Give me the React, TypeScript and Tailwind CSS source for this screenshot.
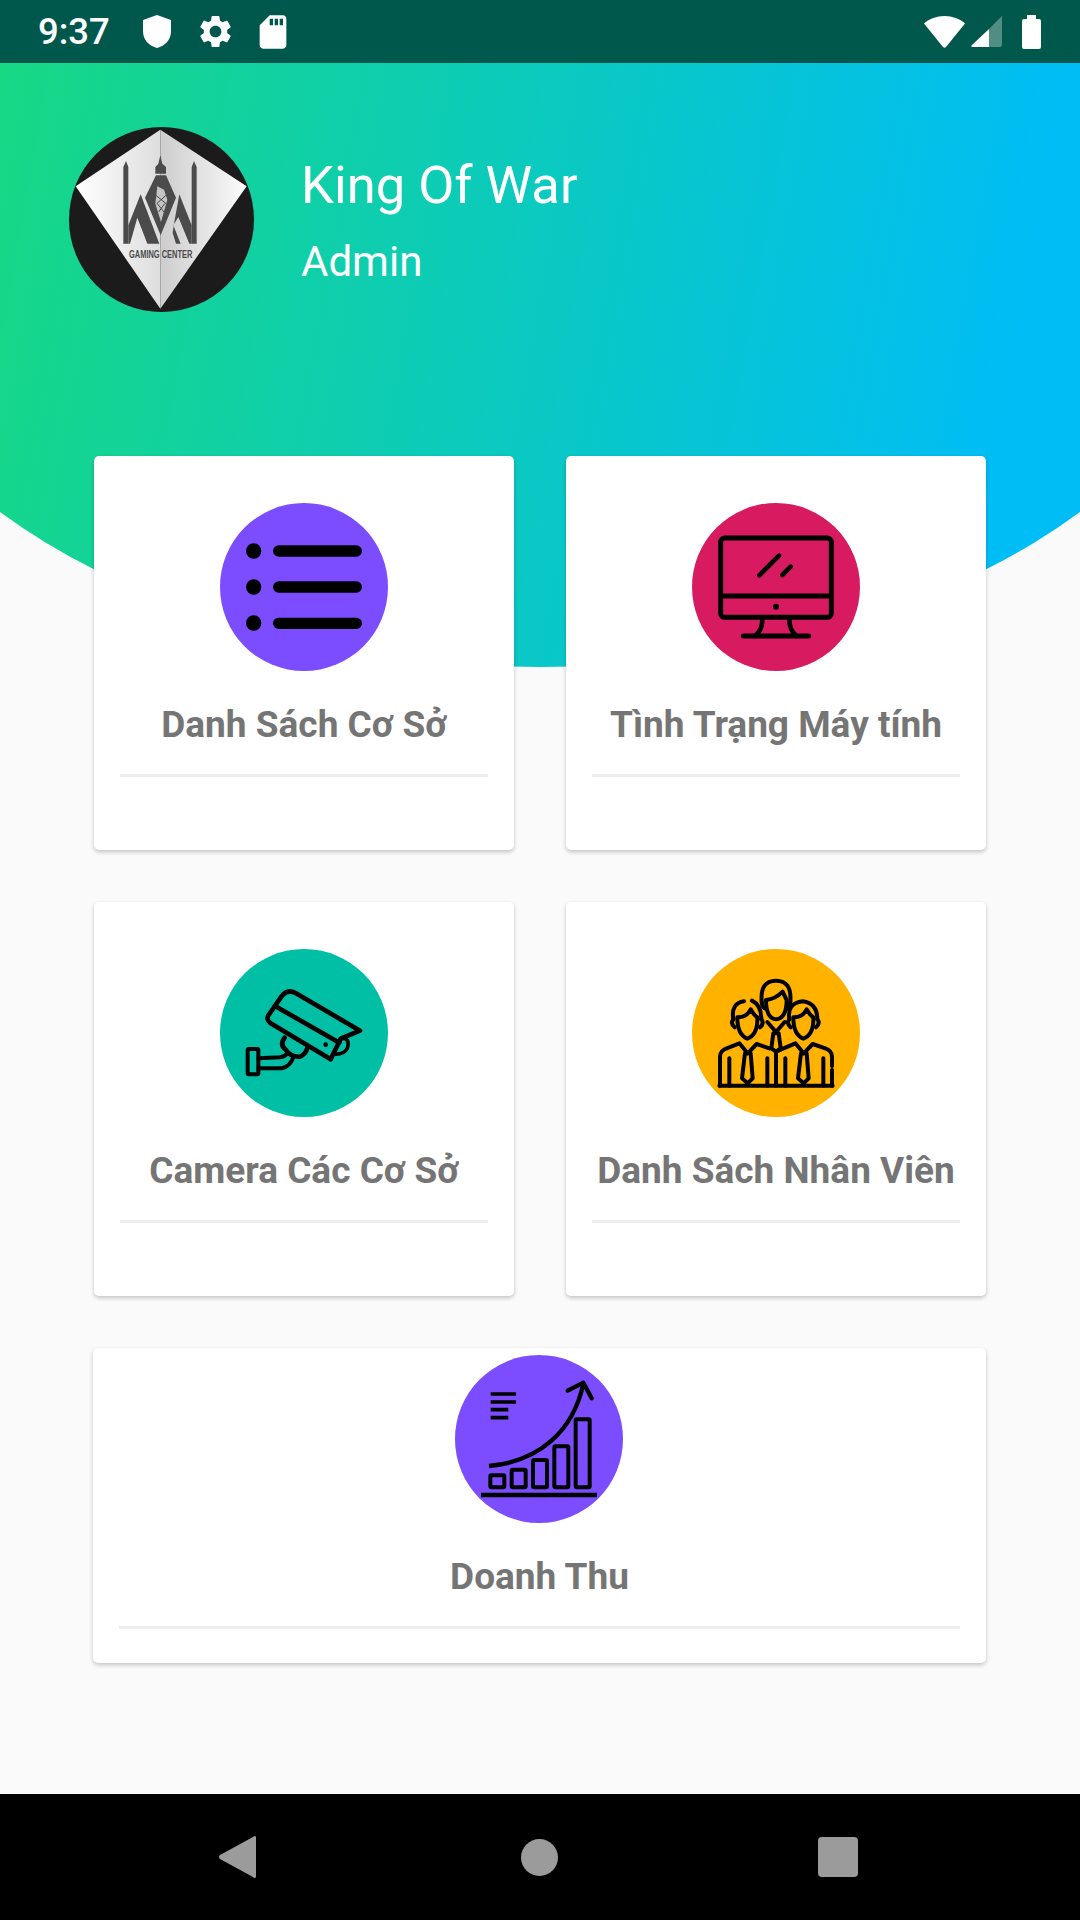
import { MdSdStorage, MdSettings } from "react-icons/md";
import type { ReactNode } from "react";

function ListIcon() {
  return (
    <svg viewBox="60 68 504 504" className="h-full w-full">
      <circle cx="161" cy="212" r="23" />
      <circle cx="161" cy="320" r="23" />
      <circle cx="161" cy="428" r="23" />
      <g stroke="#000" strokeWidth="34" strokeLinecap="round">
        <path d="M236 212H469" />
        <path d="M236 320H469" />
        <path d="M236 429H469" />
      </g>
    </svg>
  );
}

function MonitorIcon() {
  return (
    <svg viewBox="36 38 504 504" className="h-full w-full" fill="none" stroke="#000" strokeWidth="15" strokeLinecap="round" strokeLinejoin="round">
      <rect x="122" y="143" width="332" height="238" rx="12" />
      <path d="M122 317H454" strokeLinecap="butt" />
      <circle cx="288" cy="349" r="9" fill="#000" stroke="none" />
      <path d="M238 255L297 196" strokeWidth="14" />
      <path d="M307 254L332 229" strokeWidth="14" />
      <path d="M247 388C247 410 240 425 225 437" strokeWidth="14" />
      <path d="M328 388C328 410 335 425 350 437" strokeWidth="14" />
      <path d="M190 437H386" />
    </svg>
  );
}

function CameraIcon() {
  return (
    <svg viewBox="30 27 504 504" className="h-full w-full" fill="none" stroke="#000" strokeWidth="14" strokeLinecap="round" strokeLinejoin="round">
      <path d="M214 170Q232 145 258 160L450 272L392 296L362 358L182 250Q165 238 178 222Z" />
      <path d="M195 198L388 308" />
      <path d="M392 296Q422 292 412 325Q400 345 372 342" strokeWidth="11" />
      <circle cx="347" cy="314" r="7" fill="#000" stroke="none" />
      <path d="M224 293Q208 315 228 330Q242 352 270 350Q285 345 292 325" />
      <path d="M145 355L210 352Q225 350 232 340" strokeWidth="12" />
      <path d="M145 385L215 385Q240 380 250 352" strokeWidth="12" />
      <rect x="113" y="327" width="32" height="76" rx="3" strokeWidth="12" />
    </svg>
  );
}

function PeopleIcon() {
  return (
    <svg viewBox="36 27 504 504" className="h-full w-full" fill="none" stroke="#000" strokeWidth="12" strokeLinecap="round" strokeLinejoin="round">
      <path d="M245 185Q240 122 288 122Q336 122 331 185" />
      <path d="M258 180Q285 178 308 155Q316 172 320 180Q320 235 288 238Q258 235 258 180Z" />
      <path d="M245 185Q246 200 254 205" />
      <path d="M331 185Q330 200 322 205" />
      <path d="M262 246L288 276L314 246" />
      <path d="M280 280H296L302 325L288 335L274 325Z" />
      <g>
        <path d="M160 238Q152 190 192 184" />
        <path d="M216 182Q244 195 244 238" />
        <path d="M172 232Q200 232 212 208Q222 226 232 232Q234 285 202 296Q172 285 172 232Z" />
        <path d="M160 238Q150 250 164 262" />
        <path d="M244 238Q254 250 240 262" />
        <path d="M120 437V350Q120 332 140 325L178 310L203 340L230 312L268 325" />
        <path d="M195 340H212L218 415L203 430L186 415Z" />
        <path d="M148 355V437" />
        <path d="M262 355V437" />
      </g>
      <g transform="translate(168 0)">
        <path d="M160 238Q152 190 200 184Q244 190 244 238" />
        <path d="M172 232Q200 232 212 208Q222 226 232 232Q234 285 202 296Q172 285 172 232Z" />
        <path d="M160 238Q150 250 164 262" />
        <path d="M244 238Q254 250 240 262" />
        <path d="M120 437V335L178 310L203 340L230 312L268 325Q288 332 288 350V378" />
        <path d="M288 390V437" />
        <path d="M195 340H212L218 415L203 430L186 415Z" />
        <path d="M148 355V437" />
        <path d="M262 355V437" />
      </g>
      <path d="M118 437H458" />
    </svg>
  );
}

function ChartIcon() {
  return (
    <svg viewBox="30 30 504 504" className="h-full w-full" fill="none" stroke="#000" strokeWidth="12" strokeLinecap="round" strokeLinejoin="round">
      <g strokeLinecap="butt" strokeWidth="11">
        <path d="M137 147H213" />
        <path d="M137 171H213" />
        <path d="M137 194H190" />
        <path d="M137 218H190" />
      </g>
      <rect x="136" y="391" width="42" height="36" rx="3" />
      <rect x="200" y="374" width="42" height="53" rx="3" />
      <rect x="264" y="345" width="42" height="82" rx="3" />
      <rect x="328" y="304" width="42" height="123" rx="3" />
      <rect x="392" y="223" width="42" height="204" rx="3" />
      <path d="M108 450H456" strokeLinecap="butt" strokeWidth="13" />
      <path d="M132 363C280 350 385 260 415 115" strokeLinecap="butt" strokeWidth="13" />
      <path d="M368 137L415 113L440 160" strokeWidth="13" />
    </svg>
  );
}

function Logo() {
  return (
    <svg viewBox="57 50 555 555" className="h-[185px] w-[185px] shrink-0">
      <defs>
        <linearGradient id="dl" x1="0" x2="1" y1="0" y2="0">
          <stop offset="0" stopColor="#ffffff" />
          <stop offset="1" stopColor="#dedede" />
        </linearGradient>
        <linearGradient id="dr" x1="0" x2="1" y1="0" y2="0">
          <stop offset="0" stopColor="#cdcdcd" />
          <stop offset="1" stopColor="#fbfbfb" />
        </linearGradient>
      </defs>
      <circle cx="334.5" cy="327.5" r="277.5" fill="#1b1b1b" />
      <path d="M331 58L77 228L331 595Z" fill="url(#dl)" />
      <path d="M331 58L590 228L331 595Z" fill="url(#dr)" />
      <g fill="#4b4b4b">
        <path d="M220 170L228 152L235 170V400H220Z" />
        <path d="M425 170L432 152L440 170V400H425Z" />
        <path d="M235 345L272 252L328 400H292L262 322L240 400H235Z" />
        <path d="M285 262L318 195H348L378 262L332 375Z" />
        <path d="M316 190V170L325 160L331 135L337 160L348 170V190Z" />
        <path d="M388 252L425 345V400H418L385 320L370 345L392 400H378L368 368L372 340Z" />
      </g>
      <path d="M322 228L342 238L352 268L333 335L316 280Z" fill="#c4c4c4" />
      <g stroke="#4b4b4b" strokeWidth="3">
        <path d="M318 255L348 280" />
        <path d="M348 255L320 280" />
        <path d="M322 280L342 305" />
        <path d="M344 280L326 305" />
      </g>
      <text x="332" y="442" textAnchor="middle" fontFamily="'Liberation Sans', sans-serif" fontWeight="700" fontSize="32" textLength="190" lengthAdjust="spacingAndGlyphs" fill="#4b4b4b">
        GAMING CENTER
      </text>
    </svg>
  );
}

function Card({ title, color, icon }: { title: string; color: string; icon: ReactNode }) {
  return (
    <div className="flex h-[394px] flex-col items-center rounded-[5px] bg-white pt-[47px] shadow-[0_2px_4px_rgba(0,0,0,0.22)]">
      <div className={`h-[168px] w-[168px] shrink-0 overflow-hidden rounded-full ${color}`}>{icon}</div>
      <div className="mt-[34px] text-center text-[37px] leading-[40px] font-bold whitespace-nowrap text-[#757575]">{title}</div>
      <div className="mt-[29px] h-[3px] w-[368px] bg-[#eeeeee]" />
    </div>
  );
}

export default function App() {
  return (
    <div className="flex h-[1920px] w-[1080px] flex-col overflow-hidden bg-[#fafafa] font-['Roboto',sans-serif]">
      <div className="flex h-[63px] shrink-0 items-center bg-[#00574b] pl-[38px] text-white">
        <span className="w-[90px] pt-[2px] text-[36.5px] leading-none font-medium">9:37</span>
        <div className="flex w-[58px] justify-center">
          <svg viewBox="0 0 28 33" className="h-[33px] w-[28px]" fill="#fff">
            <path d="M14 0L28 5V16C28 25 22 31 14 33C6 31 0 25 0 16V5Z" />
          </svg>
        </div>
        <div className="flex w-[58px] justify-center">
          <MdSettings size={39} />
        </div>
        <div className="flex w-[58px] justify-center">
          <MdSdStorage size={40} />
        </div>
        <div className="ml-auto flex items-center pr-[39px]">
          <svg viewBox="0 0 41 32" className="h-[32px] w-[41px]" fill="#fff">
            <path d="M20.5 0C12.5 0 5.5 2.8 0 7.5L19 31Q20.5 32.5 22 31L41 7.5C35.5 2.8 28.5 0 20.5 0Z" />
          </svg>
          <svg viewBox="0 0 31 31" className="ml-[6px] h-[31px] w-[31px]" fill="#fff">
            <path d="M31 0V29Q31 31 29 31H18V13Z" fillOpacity="0.32" />
            <path d="M18 13V31H2Q-1 31 1 29Z" />
          </svg>
          <svg viewBox="0 0 19 34" className="ml-[20px] h-[34px] w-[19px]" fill="#fff">
            <path d="M5 0H14V4H17Q19 4 19 6V32Q19 34 17 34H2Q0 34 0 32V6Q0 4 2 4H5Z" />
          </svg>
        </div>
      </div>

      <div className="h-[604px] shrink-0 bg-[linear-gradient(100deg,#17d884_0%,#00bdf5_90%)] pt-[64px] pl-[69px] [clip-path:ellipse(700px_426px_at_50%_178px)]">
        <div className="flex items-start text-white">
          <Logo />
          <div className="ml-[47px]">
            <div className="mt-[28px] text-[52.5px] leading-[60px]">King Of War</div>
            <div className="mt-[22px] text-[42px] leading-[50px]">Admin</div>
          </div>
        </div>
      </div>

      <div className="relative -mt-[211px] flex flex-col gap-[52px] px-[94px]">
        <div className="grid grid-cols-2 gap-x-[52px] gap-y-[52px]">
          <Card title="Danh Sách Cơ Sở" color="bg-[#7c4dff]" icon={<ListIcon />} />
          <Card title="Tình Trạng Máy tính" color="bg-[#d81b60]" icon={<MonitorIcon />} />
          <Card title="Camera Các Cơ Sở" color="bg-[#00bfa5]" icon={<CameraIcon />} />
          <Card title="Danh Sách Nhân Viên" color="bg-[#ffb300]" icon={<PeopleIcon />} />
        </div>
        <div className="-ml-px flex h-[315px] flex-col items-center rounded-[5px] bg-white pt-[7px] shadow-[0_2px_4px_rgba(0,0,0,0.22)]">
          <div className="mr-px h-[168px] w-[168px] overflow-hidden rounded-full bg-[#7c4dff]">
            <ChartIcon />
          </div>
          <div className="mt-[34px] text-[37px] leading-[40px] font-bold text-[#757575]">Doanh Thu</div>
          <div className="mt-[29px] h-[3px] w-[841px] bg-[#eeeeee]" />
        </div>
      </div>

      <div className="mt-auto flex h-[126px] shrink-0 items-center bg-black pl-[219px]">
        <svg viewBox="0 0 37 42" className="h-[42px] w-[37px]" fill="#9b9b9b">
          <path d="M37 1V41Q36 43 34 41L1 23Q-1 21 1 19L34 1Q36 -1 37 1Z" />
        </svg>
        <div className="ml-[265px] h-[37px] w-[37px] rounded-full bg-[#9b9b9b]" />
        <div className="ml-[260px] h-[40px] w-[40px] rounded-[4px] bg-[#9b9b9b]" />
      </div>
    </div>
  );
}
